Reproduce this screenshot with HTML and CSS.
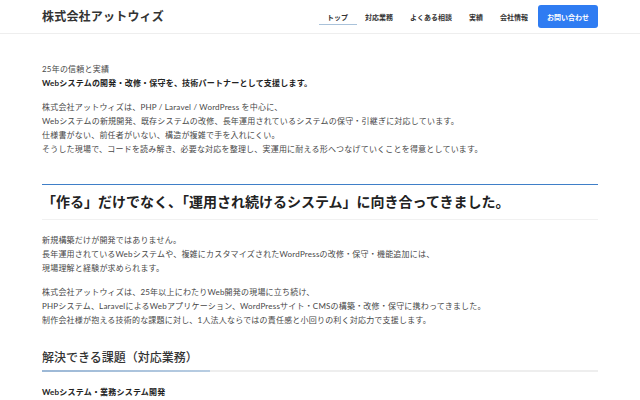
FILE: index.html
```html
<!DOCTYPE html>
<html lang="ja">
<head>
<meta charset="utf-8">
<title>株式会社アットウィズ</title>
<link rel="stylesheet" href="styles.css">
</head>
<body>
<header class="site-header">
  <div class="container header-inner">
    <div class="logo">株式会社アットウィズ</div>
    <nav class="nav">
      <a class="nav-link active" href="#">トップ</a>
      <a class="nav-link" href="#">対応業務</a>
      <a class="nav-link" href="#">よくある相談</a>
      <a class="nav-link" href="#">実績</a>
      <a class="nav-link" href="#">会社情報</a>
      <a class="nav-btn" href="#">お問い合わせ</a>
    </nav>
  </div>
</header>
<main class="container main">
  <p class="lead">25年の信頼と実績<br><strong>Webシステムの開発・改修・保守を、技術パートナーとして支援します。</strong></p>
  <p>株式会社アットウィズは、PHP / Laravel / WordPress を中心に、<br>Webシステムの新規開発、既存システムの改修、長年運用されているシステムの保守・引継ぎに対応しています。<br>仕様書がない、前任者がいない、構造が複雑で手を入れにくい。<br>そうした現場で、コードを読み解き、必要な対応を整理し、実運用に耐える形へつなげていくことを得意としています。</p>

  <h2 class="section-title">「作る」だけでなく、「運用され続けるシステム」に向き合ってきました。</h2>
  <p>新規構築だけが開発ではありません。<br>長年運用されているWebシステムや、複雑にカスタマイズされたWordPressの改修・保守・機能追加には、<br>現場理解と経験が求められます。</p>
  <p>株式会社アットウィズは、25年以上にわたりWeb開発の現場に立ち続け、<br>PHPシステム、LaravelによるWebアプリケーション、WordPressサイト・CMSの構築・改修・保守に携わってきました。<br>制作会社様が抱える技術的な課題に対し、1人法人ならではの責任感と小回りの利く対応力で支援します。</p>

  <h3 class="sub-title">解決できる課題（対応業務）</h3>
  <h4 class="item-title">Webシステム・業務システム開発</h4>
</main>
</body>
</html>
```
FILE: styles.css
```css
html, body {
  margin: 0;
  padding: 0;
  background: #ffffff;
}
body {
  font-family: Lato, "Noto Sans CJK JP", sans-serif;
  color: #474747;
  font-size: 8px;
  line-height: 14px;
  letter-spacing: 0.2px;
}
.container {
  width: 556px;
  margin: 0 auto;
}
.site-header {
  border-bottom: 1px solid #eeeeee;
}
.header-inner {
  display: flex;
  align-items: center;
  justify-content: space-between;
  height: 33px;
}
.logo {
  font-size: 12px;
  font-weight: 700;
  color: #333333;
  letter-spacing: 0.2px;
  line-height: 16px;
}
.nav {
  display: flex;
  align-items: center;
  height: 33px;
}
.nav-link {
  display: flex;
  align-items: center;
  height: 100%;
  box-sizing: border-box;
  padding: 1px 8.5px 0;
  font-size: 7px;
  font-weight: 600;
  letter-spacing: 0;
  color: #333333;
  text-decoration: none;
  border-bottom: 1px solid transparent;
  margin-bottom: -1px;
}
.nav-link.active {
  border-bottom: 1px solid #a9c2da;
  margin-bottom: 8px;
  height: 24px;
  padding-top: 9px;
}
.nav-btn {
  display: flex;
  align-items: center;
  height: 23px;
  padding: 0 9px;
  margin-left: 1.5px;
  background: #2f7cf2;
  color: #ffffff;
  border-radius: 3px;
  font-size: 7px;
  font-weight: 700;
  letter-spacing: 0;
  text-decoration: none;
}
.main {
  padding-top: 28px;
  padding-bottom: 20px;
}
p {
  margin: 0 0 10px;
}
.lead strong {
  color: #222222;
  font-weight: 700;
}
.section-title {
  margin: 28px 0 13px;
  padding: 7px 0;
  border-top: 1px solid #3f7fc8;
  border-bottom: 1px solid #f1f1f1;
  font-size: 14px;
  line-height: 20px;
  font-weight: 700;
  color: #222222;
  letter-spacing: 0;
}
.sub-title {
  margin: 22px 0 13px;
  padding-bottom: 5px;
  font-size: 12px;
  line-height: 18px;
  font-weight: 500;
  color: #333333;
  letter-spacing: 0;
  background:
    linear-gradient(90deg, #9cb8d6, #b8cde2) left bottom / 168px 2px no-repeat,
    linear-gradient(#eeeeee, #eeeeee) left bottom / 100% 2px no-repeat;
}
.item-title {
  margin: 0;
  font-size: 8px;
  line-height: 14px;
  font-weight: 700;
  color: #222222;
}
```
